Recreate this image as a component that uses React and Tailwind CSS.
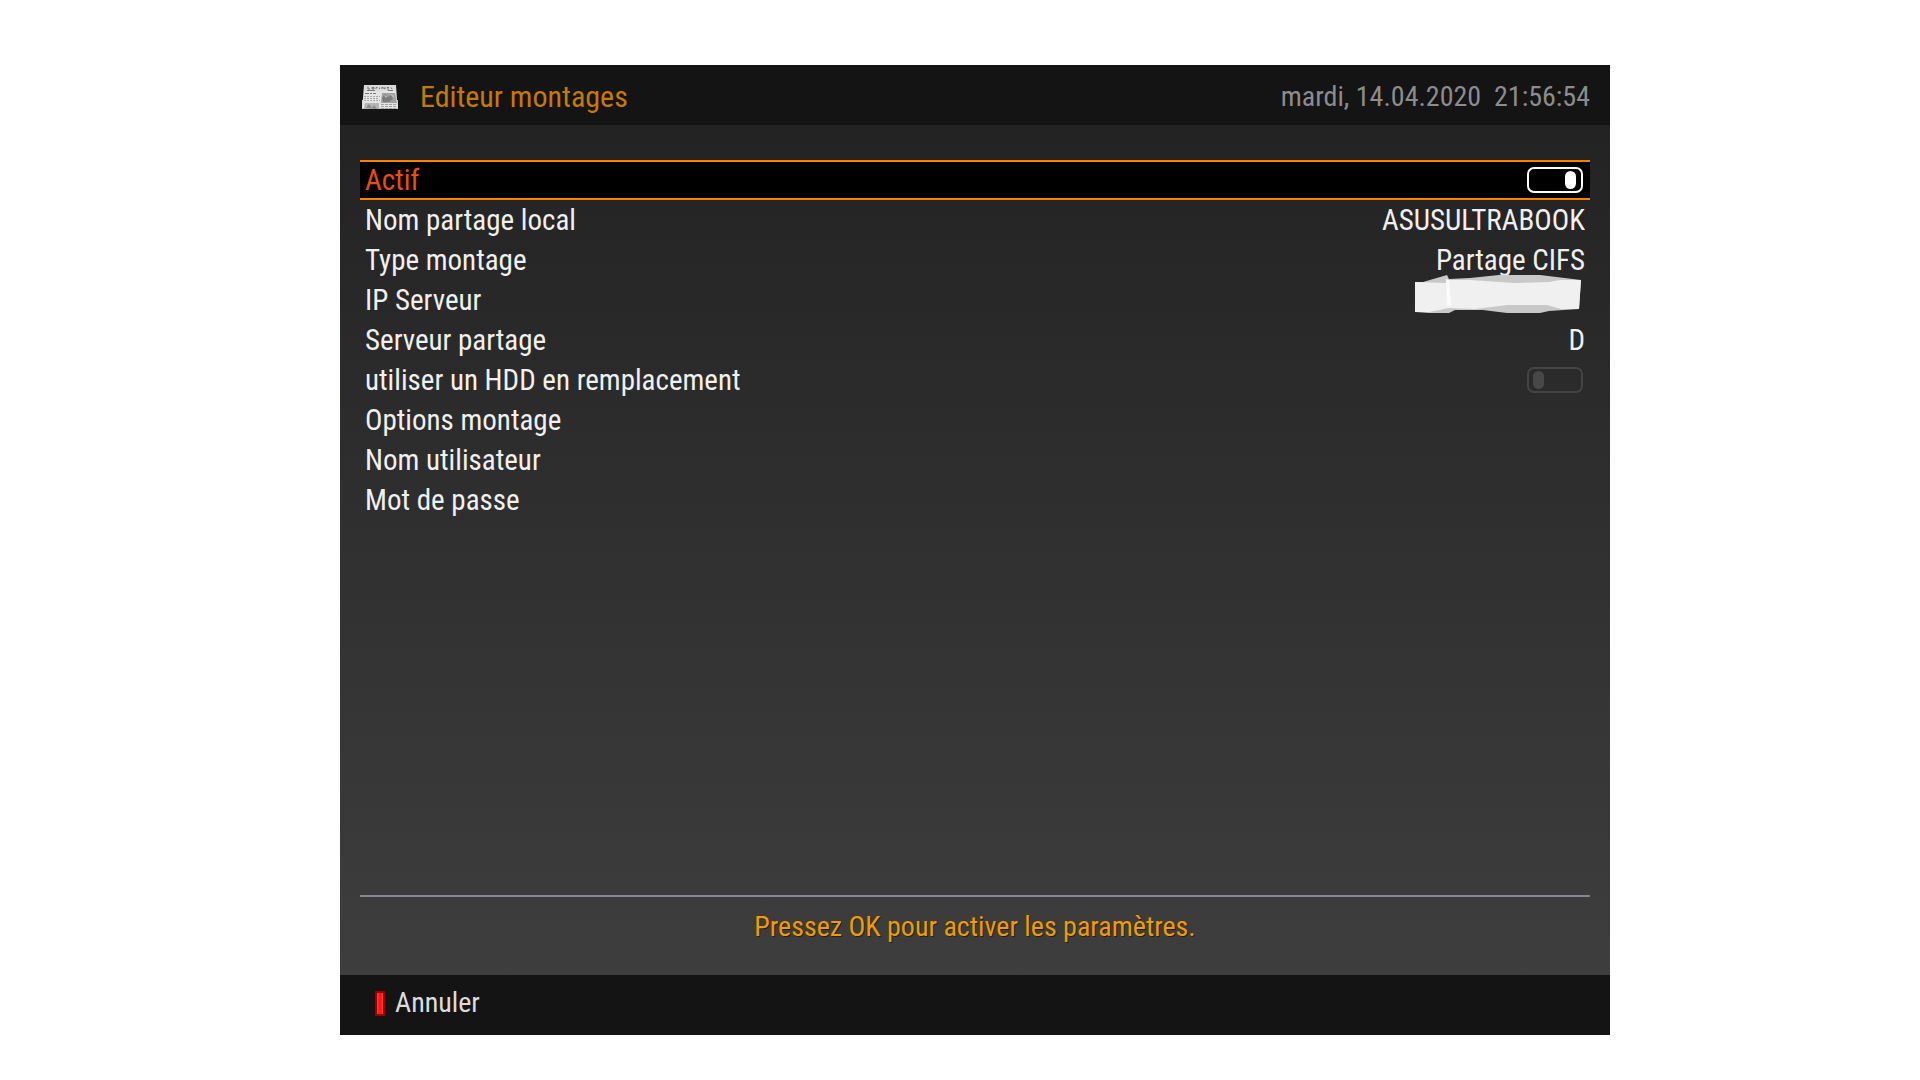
import React, { useState } from "react";

function NewspaperIcon() {
  return (
    <svg viewBox="0 0 36 24" className="h-6 w-9 shrink-0" aria-hidden="true">
      <path d="M0 15H36V24H0Z" fill="#c9c9c9" />
      <path d="M2 0H34L35 15L36 23H0L1 13Z" fill="#e4e4e4" />
      <path d="M2 0H34V6H2Z" fill="#dadada" />
      <path d="M6 1.500v2.500h2M10 2.500h2v1.500h-2zM14 4v-1.500h1.500M17.500 4v-1.500M20 4V2l3 2V2M25 2.500h2M25 4h2M29 2.500l1 1.500" stroke="#5a5a5a" strokeWidth="0.800" fill="none" />
      <path d="M5 5.500h8M26 5.500h5" stroke="#777" strokeWidth="1" />
      <path d="M3 8.500h4M8 8.500h2M11 8.500h3" stroke="#777" strokeWidth="1" />
      <path d="M2 11.500h16M2 13.500h15M2 15.500h16" stroke="#a8a8a8" strokeWidth="1" strokeDasharray="2 1" />
      <path d="M20 8H33L35 18H19Z" fill="#a2a2a2" />
      <path d="M20 13l3-4 3 3 3-2 2 4-4 3-6 0z" fill="#7c7c7c" />
      <path d="M22 10l3 1-1 2zM28 9l3 1 1 3z" fill="#c4c4c4" />
      <path d="M3 18H17V24H2Z" fill="#b4b4b4" />
      <path d="M4 23l3-4 3 4 2-3 3 4z" fill="#8c8c8c" />
      <path d="M19 19.500h15M19 21.500h16M19 23.500h16" stroke="#a4a4a4" strokeWidth="1" strokeDasharray="3 1" />
    </svg>
  );
}

function Toggle({ id, checked, onChange }) {
  return (
    <input
      id={id}
      type="checkbox"
      role="switch"
      checked={checked}
      onChange={(e) => onChange(e.target.checked)}
      className="mr-0.5 flex h-[26px] w-14 appearance-none items-center justify-start rounded-[7px] border-2 border-[#444] px-1 before:h-[18px] before:w-[11px] before:rounded-full before:bg-[#484848] before:content-[''] checked:justify-end checked:border-white checked:pr-[5px] checked:before:bg-white focus:outline-none"
    />
  );
}

function Row({ id, label, selected, children }) {
  return (
    <div
      className={
        selected
          ? "flex h-10 items-center justify-between border-y-2 border-[#ff8000] bg-black px-[5px] text-[#e8500a]"
          : "flex h-10 items-center justify-between px-[5px] text-[#f0f0f0]"
      }
    >
      <label htmlFor={id} className="whitespace-nowrap">{label}</label>
      {children}
    </div>
  );
}

const fieldClass = "min-w-0 flex-1 appearance-none bg-transparent p-0 text-right focus:outline-none";

function TextField({ id, type = "text", value }) {
  return <input id={id} type={type} defaultValue={value} autoComplete="off" className={fieldClass} />;
}

function Smudge() {
  return (
    <svg viewBox="0 0 166 38" className="absolute -top-[5px] right-1 h-[38px] w-[166px]" aria-hidden="true">
      <path d="M8 7L32 0L34 4L55 3L84 0H125L166 5L164 34L134 36L125 38H92L68 35L40 35L34 38H14L0 37V7Z" fill="#c8c8c8" />
      <path d="M0 7L30 8L33 5H55L84 7L100 8L134 7L145 5H166L164 34H146L132 30H92L60 34L34 33L14 37H0Z" fill="#f0f0f0" />
      <path d="M31 4L34 5L36 30L32 31Z" fill="#fcfcfc" />
    </svg>
  );
}

export default function App() {
  const [active, setActive] = useState(true);
  const [hdd, setHdd] = useState(false);

  return (
    <div className="flex min-h-screen flex-col bg-white pt-[65px] pr-[310px] pb-[45px] pl-[340px] font-['Roboto_Condensed','Liberation_Sans_Narrow',Roboto,sans-serif] text-[30px] leading-9">
      <main className="flex flex-1 flex-col bg-linear-to-b from-[#212121] to-[#404040]">
        <header className="flex h-[60px] items-center justify-between bg-[#141414] px-5 pt-1">
          <div className="flex items-center gap-[22px] pl-0.5">
            <NewspaperIcon />
            <h1 className="text-[#c47a08]">Editeur montages</h1>
          </div>
          <time dateTime="2020-04-14T21:56:54" className="whitespace-pre text-[28px] text-[#8c8c8c]">
            {"mardi, 14.04.2020  21:56:54"}
          </time>
        </header>

        <form className="flex flex-1 flex-col px-5 pt-[35px] text-[29px]" onSubmit={(e) => e.preventDefault()}>
          <Row id="actif" label="Actif" selected>
            <Toggle id="actif" checked={active} onChange={setActive} />
          </Row>
          <Row id="nom" label="Nom partage local">
            <TextField id="nom" value="ASUSULTRABOOK" />
          </Row>
          <Row id="type" label="Type montage">
            <select id="type" className={fieldClass}>
              <option>Partage CIFS</option>
            </select>
          </Row>
          <Row id="ip" label="IP Serveur">
            <div className="relative flex h-10 flex-1">
              <TextField id="ip" value="" />
              <Smudge />
            </div>
          </Row>
          <Row id="partage" label="Serveur partage">
            <TextField id="partage" value="D" />
          </Row>
          <Row id="hdd" label="utiliser un HDD en remplacement">
            <Toggle id="hdd" checked={hdd} onChange={setHdd} />
          </Row>
          <Row id="options" label="Options montage">
            <TextField id="options" value="" />
          </Row>
          <Row id="user" label="Nom utilisateur">
            <TextField id="user" value="" />
          </Row>
          <Row id="pass" label="Mot de passe">
            <TextField id="pass" type="password" value="" />
          </Row>

          <p className="mt-auto h-20 border-t-2 border-[#868690] pt-3 text-center text-[28px] text-[#f09c00] text-shadow-[1px_1px_0_#00000080]">
            Pressez OK pour activer les paramètres.
          </p>
        </form>

        <footer className="flex h-[60px] items-center bg-[#141414] px-[35px] pb-1">
          <button type="button" className="flex items-center gap-2.5 text-[28px] text-[#dcdcdc]">
            <span className="h-[25px] w-2.5 border-2 border-[#980000] bg-linear-to-r from-[#ff3a30] via-[#ff0000] to-[#ff3a30]" />
            Annuler
          </button>
        </footer>
      </main>
    </div>
  );
}
